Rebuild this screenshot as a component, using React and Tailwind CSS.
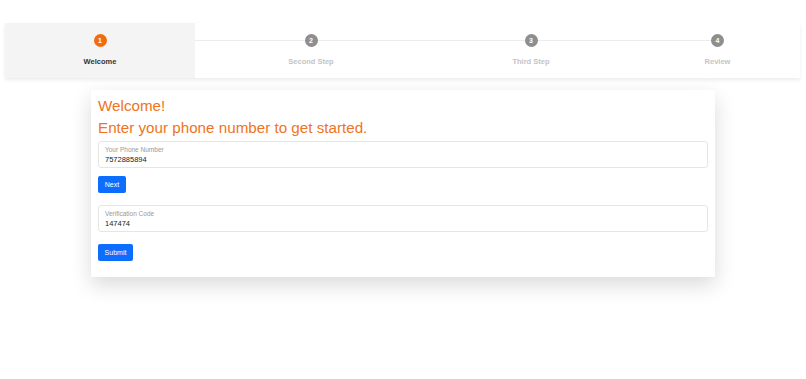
const steps = [
  { n: 1, label: "Welcome", w: "w-[190px]", active: true },
  { n: 2, label: "Second Step", w: "w-[232px]" },
  { n: 3, label: "Third Step", w: "w-[208px]" },
  { n: 4, label: "Review", w: "w-[165px]" },
];

function Field({ label, value }) {
  return (
    <div className="h-[27px] border border-[#e6e6e6] rounded-[3px] px-[6px] pt-[5px] leading-none">
      <div className="text-[6.5px] text-[#999]">{label}</div>
      <div className="text-[7.5px] text-[#222] mt-[2px]">{value}</div>
    </div>
  );
}

export default function App() {
  return (
    <div
      className="w-[806px] h-[379px] bg-white pt-[23px]"
      style={{ fontFamily: '"Liberation Sans", Arial, sans-serif' }}
    >
      {/* stepper */}
      <div className="relative ml-[5px] w-[795px] h-[55px] flex bg-white shadow-[0_2px_4px_rgba(0,0,0,0.08)]">
        <div className="absolute left-[94px] right-[84px] top-[17px] h-px bg-[#ececec]" />
        {steps.map((s) => (
          <div
            key={s.n}
            className={`${s.w} relative flex flex-col items-center pt-[11px] ${s.active ? "bg-[#f4f4f4]" : ""}`}
          >
            <div
              className={`w-[13px] h-[13px] rounded-full flex items-center justify-center text-white text-[7px] font-bold leading-none ${s.active ? "bg-[#f26b0f]" : "bg-[#8e8e8e]"}`}
            >
              {s.n}
            </div>
            <div
              className={`mt-[9px] text-[7.5px] font-bold ${s.active ? "text-[#333]" : "text-[#c4c4c4]"}`}
            >
              {s.label}
            </div>
          </div>
        ))}
      </div>

      {/* card */}
      <div className="ml-[91px] mt-[12px] w-[624px] h-[187px] bg-white px-[7px] pt-[5px] shadow-[0_8px_20px_rgba(0,0,0,0.15)]">
        <h1 className="text-[15.2px] leading-[22px] text-[#ef7421]">Welcome!</h1>
        <h2 className="text-[15.2px] leading-[22px] text-[#ef7421]">
          Enter your phone number to get started.
        </h2>
        <div className="mt-[2px]">
          <Field label="Your Phone Number" value="7572885894" />
        </div>
        <button className="block mt-[8px] h-[17px] w-[28px] rounded-[2px] bg-[#0d6efd] text-white text-[7px] leading-none">
          Next
        </button>
        <div className="mt-[12px]">
          <Field label="Verification Code" value="147474" />
        </div>
        <button className="block mt-[12px] h-[17px] w-[35px] rounded-[2px] bg-[#0d6efd] text-white text-[7px] leading-none">
          Submit
        </button>
      </div>
    </div>
  );
}
